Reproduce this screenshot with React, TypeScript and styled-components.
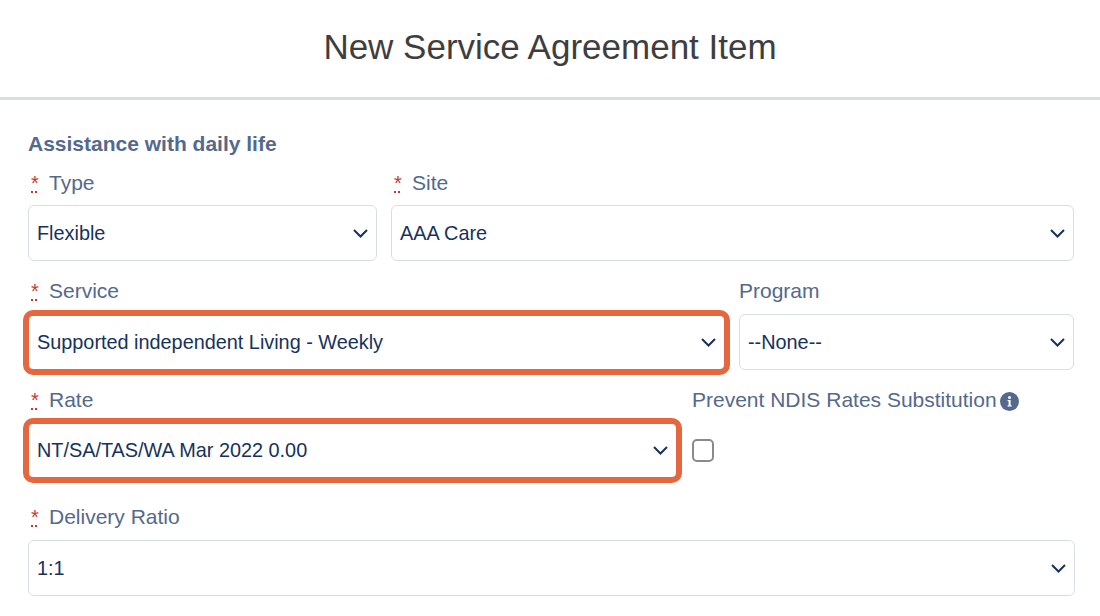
import React, { FunctionComponent } from 'react';
import styled, { createGlobalStyle } from 'styled-components';

const GlobalStyle = createGlobalStyle`
  html, body {
    margin: 0;
    padding: 0;
    background: #fff;
    font-family: "Liberation Sans", Arial, sans-serif;
  }
`;

const Page = styled.div`
  width: 1100px;
  height: 616px;
  overflow: hidden;
`;

const Header = styled.header`
  height: 100px;
  padding-bottom: 3px;
  box-sizing: border-box;
  display: flex;
  align-items: center;
  justify-content: center;
  border-bottom: 3px solid #d8dde6;
`;

const Title = styled.h1`
  margin: 0;
  font-size: 35px;
  font-weight: 400;
  color: #3e3e3e;
`;

const Body = styled.main`
  padding: 32px 25px 0 28px;
`;

const SectionTitle = styled.h2`
  margin: 0 0 16px;
  font-size: 21px;
  line-height: 24px;
  font-weight: 700;
  color: #54698d;
`;

const Row = styled.div<{ $top?: number; $gap?: number; $inset?: number }>`
  display: flex;
  gap: ${(props) => props.$gap ?? 14}px;
  margin-top: ${(props) => props.$top ?? 0}px;
  padding-right: ${(props) => props.$inset ?? 0}px;
`;

const Field = styled.div<{ $width?: number }>`
  flex: ${(props) => (props.$width ? `0 0 ${props.$width}px` : '1 1 0')};
  min-width: 0;
`;

const Label = styled.label<{ $gap?: number }>`
  display: flex;
  align-items: center;
  height: 22px;
  margin-bottom: ${(props) => props.$gap ?? 12}px;
  font-size: 21px;
  line-height: 22px;
  color: #54698d;
`;

const Required = styled.abbr`
  width: 21px;
  flex: none;
  padding-left: 3px;
  box-sizing: border-box;
  font-size: 20px;
  color: #c23934;
  text-decoration: underline dotted;
`;

const SelectBox = styled.div`
  position: relative;
  display: flex;
  align-items: center;
  justify-content: space-between;
  height: 56px;
  box-sizing: border-box;
  padding: 0 8px;
  background: #fff;
  border: 1px solid #d8dde6;
  border-radius: 6px;
  font-size: 19.85px;
  color: #16325c;
`;

const Highlight = styled.span`
  position: absolute;
  inset: -5px -6px -6px -6px;
  border: 6px solid #e5673f;
  border-radius: 10px;
`;

const Chevron = styled.svg`
  width: 15px;
  height: 9px;
  flex: none;
  fill: none;
  stroke: #16325c;
  stroke-width: 2;
`;

const CheckboxSlot = styled.div`
  display: flex;
  align-items: center;
  height: 56px;
`;

const Checkbox = styled.div`
  width: 22px;
  height: 23px;
  box-sizing: border-box;
  border: 2px solid #8a8a8a;
  border-radius: 5px;
`;

const InfoIcon = styled.svg`
  width: 19px;
  height: 19px;
  flex: none;
  margin: 3px 0 0 3px;
`;

const Select: FunctionComponent<{ value: string; highlight?: boolean }> = ({ value, highlight }) => (
  <SelectBox>
    <span>{value}</span>
    <Chevron viewBox="0 0 15 9">
      <path d="M1 1l6.5 6.5L14 1" />
    </Chevron>
    {highlight && <Highlight />}
  </SelectBox>
);

const Star = () => <Required title="required">*</Required>;

const App: FunctionComponent = () => {
  return (
    <Page>
      <GlobalStyle />
      <Header>
        <Title>New Service Agreement Item</Title>
      </Header>
      <Body>
        <SectionTitle>Assistance with daily life</SectionTitle>
        <Row $inset={1}>
          <Field $width={349}>
            <Label $gap={11}>
              <Star />
              Type
            </Label>
            <Select value="Flexible" />
          </Field>
          <Field>
            <Label $gap={11}>
              <Star />
              Site
            </Label>
            <Select value="AAA Care" />
          </Field>
        </Row>
        <Row $top={19} $inset={1}>
          <Field $width={697}>
            <Label>
              <Star />
              Service
            </Label>
            <Select value="Supported independent Living - Weekly" highlight />
          </Field>
          <Field>
            <Label>Program</Label>
            <Select value="--None--" />
          </Field>
        </Row>
        <Row $top={19} $gap={15}>
          <Field $width={649}>
            <Label $gap={11}>
              <Star />
              Rate
            </Label>
            <Select value="NT/SA/TAS/WA Mar 2022 0.00" highlight />
          </Field>
          <Field>
            <Label $gap={11}>
              Prevent NDIS Rates Substitution
              <InfoIcon viewBox="0 0 19 19">
                <circle cx="9.5" cy="9.5" r="9.5" fill="#54698d" />
                <circle cx="9.5" cy="5.6" r="1.5" fill="#fff" />
                <path d="M7.6 8h3v5.2h1v1.3H7.6v-1.3h1V9.3h-1z" fill="#fff" />
              </InfoIcon>
            </Label>
            <CheckboxSlot>
              <Checkbox />
            </CheckboxSlot>
          </Field>
        </Row>
        <Row $top={28}>
          <Field>
            <Label>
              <Star />
              Delivery Ratio
            </Label>
            <Select value="1:1" />
          </Field>
        </Row>
      </Body>
    </Page>
  );
};

export default App;
